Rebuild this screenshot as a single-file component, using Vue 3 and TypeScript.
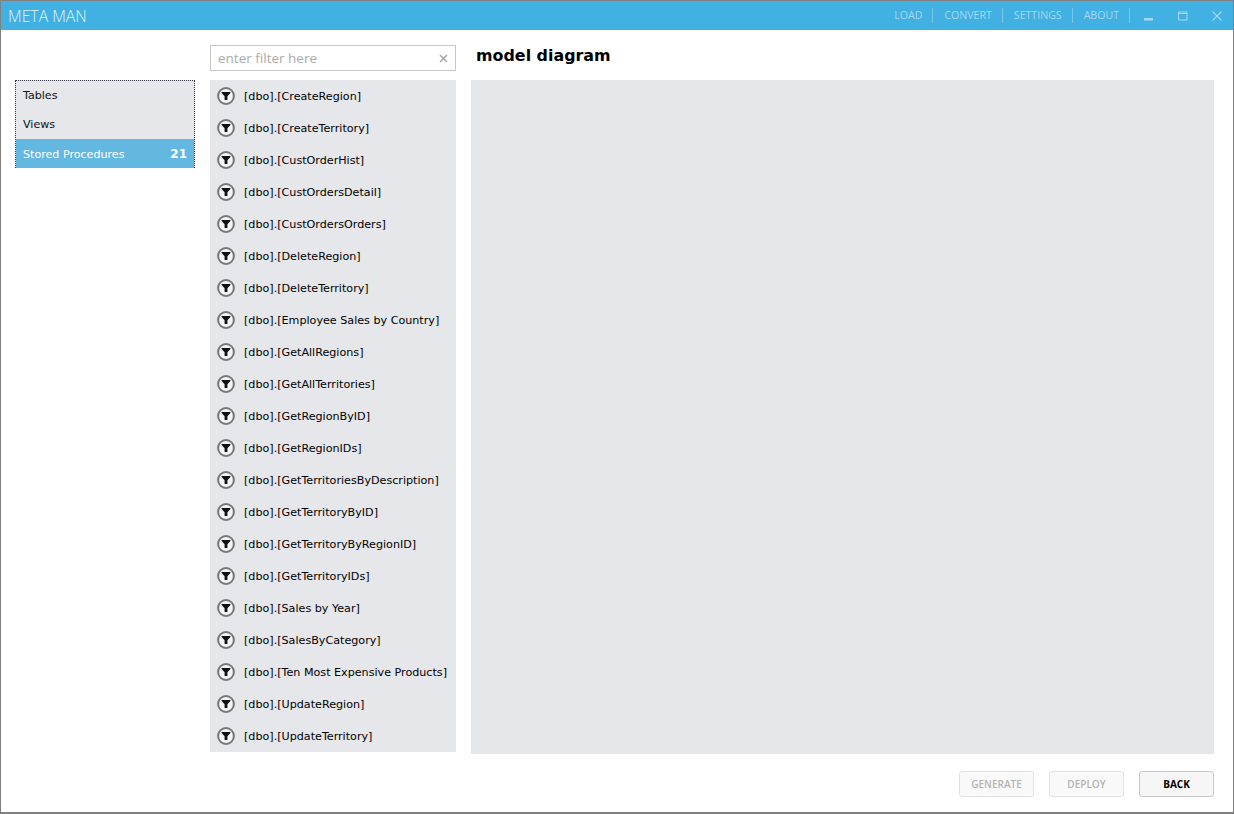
<script setup lang="ts">
const menu: string[] = ['LOAD', 'CONVERT', 'SETTINGS', 'ABOUT']
const procedures: string[] = [
  'CreateRegion', 'CreateTerritory', 'CustOrderHist', 'CustOrdersDetail', 'CustOrdersOrders',
  'DeleteRegion', 'DeleteTerritory', 'Employee Sales by Country', 'GetAllRegions', 'GetAllTerritories',
  'GetRegionByID', 'GetRegionIDs', 'GetTerritoriesByDescription', 'GetTerritoryByID', 'GetTerritoryByRegionID',
  'GetTerritoryIDs', 'Sales by Year', 'SalesByCategory', 'Ten Most Expensive Products', 'UpdateRegion', 'UpdateTerritory',
]
</script>

<template>
  <div class="window">
    <header class="titlebar">
      <div class="brand">META MAN</div>
      <nav class="menu">
        <span v-for="m in menu" :key="m" class="menu-item">{{ m }}</span>
      </nav>
      <div class="controls">
        <svg width="10" height="10" viewBox="0 0 10 10"><rect x="0" y="7" width="9" height="2.500" fill="#a5d8f1" /></svg>
        <svg width="10" height="10" viewBox="0 0 10 10"><path d="M.5 1h8.500v8H.5zM.5 2.500h8.500" fill="none" stroke="#a5d8f1" /></svg>
        <svg width="10" height="10" viewBox="0 0 10 10"><path d="M.5.5l9 9M9.500.5l-9 9" fill="none" stroke="#a5d8f1" stroke-width="1.100" /></svg>
      </div>
    </header>
    <main class="content">
      <aside class="nav">
        <div class="nav-item">Tables</div>
        <div class="nav-item">Views</div>
        <div class="nav-item active"><span>Stored Procedures</span><b>21</b></div>
      </aside>
      <section class="middle">
        <div class="filter">
          <span class="placeholder">enter filter here</span>
          <svg width="9" height="9" viewBox="0 0 9 9"><path d="M1 1l7 7M8 1l-7 7" stroke="#a9a9a9" stroke-width="1.600" fill="none" /></svg>
        </div>
        <ul class="list">
          <li v-for="p in procedures" :key="p" class="row">
            <svg class="icon" width="18" height="18" viewBox="0 0 18 18">
              <circle cx="9" cy="9" r="7.900" fill="#f4f4f6" stroke="#777" stroke-width="2" />
              <path d="M4.600 5h8.800v1L10.400 9.200v3.800H7.600V9.200L4.600 6z" fill="#111" />
            </svg>
            <span>[dbo].[{{ p }}]</span>
          </li>
        </ul>
      </section>
      <section class="diagram-col">
        <h1 class="heading">model diagram</h1>
        <div class="diagram"></div>
      </section>
    </main>
    <footer class="footer">
      <button class="btn" disabled>GENERATE</button>
      <button class="btn" disabled>DEPLOY</button>
      <button class="btn primary">BACK</button>
    </footer>
  </div>
</template>

<style>
html, body { margin: 0; background: #fff; }
</style>

<style scoped>
.window {
  box-sizing: border-box;
  width: 1234px;
  height: 814px;
  border: 1px solid #808080;
  border-bottom-width: 2px;
  display: flex;
  flex-direction: column;
  background: #fff;
  overflow: hidden;
  font-family: "DejaVu Sans", Verdana, sans-serif;
}
.titlebar {
  height: 29px;
  background: #41b0e2;
  display: flex;
  align-items: center;
  flex: none;
}
.brand {
  font-family: "Open Sans", sans-serif;
  font-size: 15.800px;
  font-weight: 300;
  color: #e3f3fb;
  margin-left: 7px;
  flex: 1;
}
.menu { display: flex; align-items: center; }
.menu-item {
  font-family: "Open Sans", sans-serif;
  font-size: 10.600px;
  color: #a5d8f1;
  padding: 0 10px 0 11px;
  height: 15px;
  line-height: 15px;
  border-right: 1px solid #79c6ea;
}
.controls {
  display: flex;
  align-items: center;
  gap: 24px;
  margin-left: 14px;
  margin-right: 11px;
}
.content {
  flex: 1;
  min-height: 0;
  display: grid;
  grid-template-columns: 180px 246px 743px;
  column-gap: 15px;
  padding: 15px 19px 0 14px;
}
.nav {
  box-sizing: border-box;
  margin-top: 35px;
  height: 88px;
  border: 1px dotted #334;
  background: #e6e7eb;
  font-size: 11.100px;
  align-self: start;
}
.nav-item {
  height: 29px;
  line-height: 29px;
  padding: 0 7px;
  color: #111;
  display: flex;
  justify-content: space-between;
}
.nav-item.active {
  background: #63b8e2;
  color: #fff;
  line-height: 31px;
}
.nav-item b { font-size: 12px; }
.middle { display: flex; flex-direction: column; }
.filter {
  box-sizing: border-box;
  height: 26px;
  border: 1px solid #c8c8c8;
  display: flex;
  align-items: center;
  justify-content: space-between;
  padding: 0 7px;
}
.placeholder {
  font-family: "Open Sans", sans-serif;
  font-size: 13.500px;
  color: #aaa;
}
.list {
  list-style: none;
  margin: 9px 0 0;
  padding: 0;
  height: 672px;
  background: #e6e7eb;
}
.row {
  height: 32px;
  display: flex;
  align-items: center;
  padding-left: 7px;
  font-size: 11.150px;
  color: #000;
  white-space: nowrap;
}
.icon { margin-right: 9px; flex: none; }
.diagram-col { display: flex; flex-direction: column; }
.heading {
  margin: 0;
  height: 35px;
  padding-left: 5px;
  font-size: 15.900px;
  line-height: 22px;
  font-weight: 700;
  color: #000;
}
.diagram { height: 674px; background: #e6e7eb; }
.footer {
  flex: none;
  height: 59px;
  display: flex;
  justify-content: flex-end;
  gap: 15px;
  padding: 18px 19px 0 0;
  box-sizing: border-box;
  align-items: flex-start;
}
.btn {
  box-sizing: border-box;
  width: 75px;
  height: 26px;
  border: 1px solid #e3e3e3;
  border-radius: 3px;
  background: #f9f9f9;
  color: #b4b4b4;
  font-family: "Open Sans", sans-serif;
  font-size: 10px;
  font-weight: 600;
  padding: 0;
}
.btn.primary {
  border-color: #c9c9c9;
  background: #f6f6f6;
  color: #000;
  font-weight: 700;
}
</style>
